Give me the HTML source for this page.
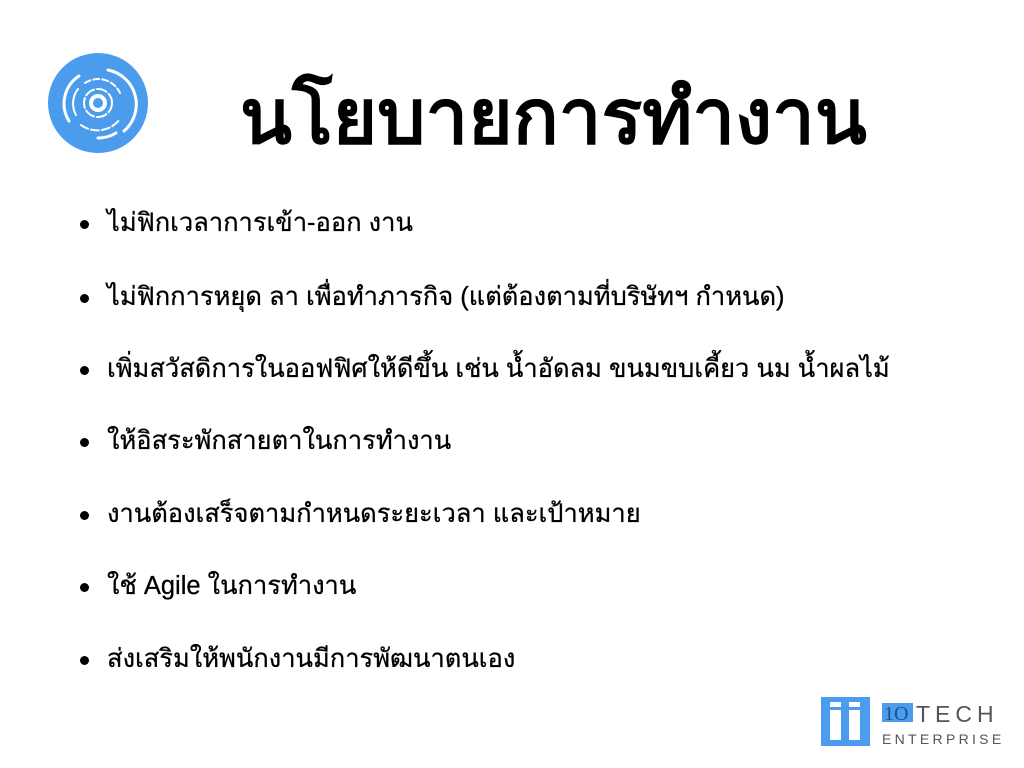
<!DOCTYPE html>
<html><head><meta charset="utf-8"><style>
body{margin:0;width:1024px;height:768px;background:#fff;position:relative;overflow:hidden;font-family:"Liberation Sans","DejaVu Sans",sans-serif;color:#000}
.t{position:absolute;left:240px;top:80px;font-size:76px;font-weight:bold;white-space:nowrap;line-height:1}
.b{position:absolute;left:80px;font-size:25.5px;white-space:nowrap;line-height:30px}
.b:before{content:"";position:absolute;left:0;top:12px;width:9px;height:9px;border-radius:50%;background:#000}
.b span{margin-left:27px;-webkit-text-stroke:0.3px #000}
</style></head><body>
<svg style="position:absolute;left:48px;top:53px" width="100" height="100" viewBox="0 0 100 100">
<circle cx="50" cy="50" r="50" fill="#4b9cec"/>
<g fill="none" stroke="#fff" stroke-linecap="round">
<circle cx="50" cy="50" r="7" stroke-width="4"/>
<circle cx="50" cy="50" r="14" stroke-width="2" stroke-dasharray="10 3"/>
<path d="M37 30 A24 24 0 0 1 72 40" stroke-width="2" stroke-dasharray="6 3"/>
<path d="M28 62 A24 24 0 0 1 30 36" stroke-width="2"/>
<path d="M33 72 A28 28 0 0 0 72 66" stroke-width="2" stroke-dasharray="8 3"/>
<path d="M21 68 A33 33 0 0 1 31 23" stroke-width="3"/>
<path d="M60 17 A35 35 0 0 1 76 78" stroke-width="3"/>
<path d="M50 85 A35 35 0 0 0 68 80" stroke-width="3"/>
</g></svg>
<div class="t">นโยบายการทำงาน</div>
<div class="b" style="top:208px"><span>ไม่ฟิกเวลาการเข้า-ออก งาน</span></div>
<div class="b" style="top:282px"><span>ไม่ฟิกการหยุด ลา เพื่อทำภารกิจ (แต่ต้องตามที่บริษัทฯ กำหนด)</span></div>
<div class="b" style="top:354px"><span>เพิ่มสวัสดิการในออฟฟิศให้ดีขึ้น เช่น น้ำอัดลม ขนมขบเคี้ยว นม น้ำผลไม้</span></div>
<div class="b" style="top:426px"><span>ให้อิสระพักสายตาในการทำงาน</span></div>
<div class="b" style="top:499px"><span>งานต้องเสร็จตามกำหนดระยะเวลา และเป้าหมาย</span></div>
<div class="b" style="top:571px"><span>ใช้ Agile ในการทำงาน</span></div>
<div class="b" style="top:644px"><span>ส่งเสริมให้พนักงานมีการพัฒนาตนเอง</span></div>
<svg style="position:absolute;left:820px;top:696px" width="190" height="55" viewBox="0 0 190 55">
<rect x="1" y="1" width="49" height="49" fill="#4b9cec"/>
<rect x="10" y="14" width="11" height="30" fill="#fff"/><rect x="29" y="14" width="11" height="30" fill="#fff"/>
<rect x="10" y="6" width="11" height="5" fill="#fff"/><rect x="29" y="6" width="11" height="5" fill="#fff"/>
<rect x="62" y="7" width="31" height="19" fill="#4b9cec"/>
<text x="64" y="24" font-family="Liberation Serif,serif" font-size="20" fill="#1b4f8a">1O</text>
<text x="96" y="26" font-family="Liberation Sans,sans-serif" font-size="23" letter-spacing="5" fill="#555">TECH</text>
<text x="62" y="48" font-family="Liberation Sans,sans-serif" font-size="14" letter-spacing="3.3" fill="#555">ENTERPRISE</text>
</svg>
</body></html>
